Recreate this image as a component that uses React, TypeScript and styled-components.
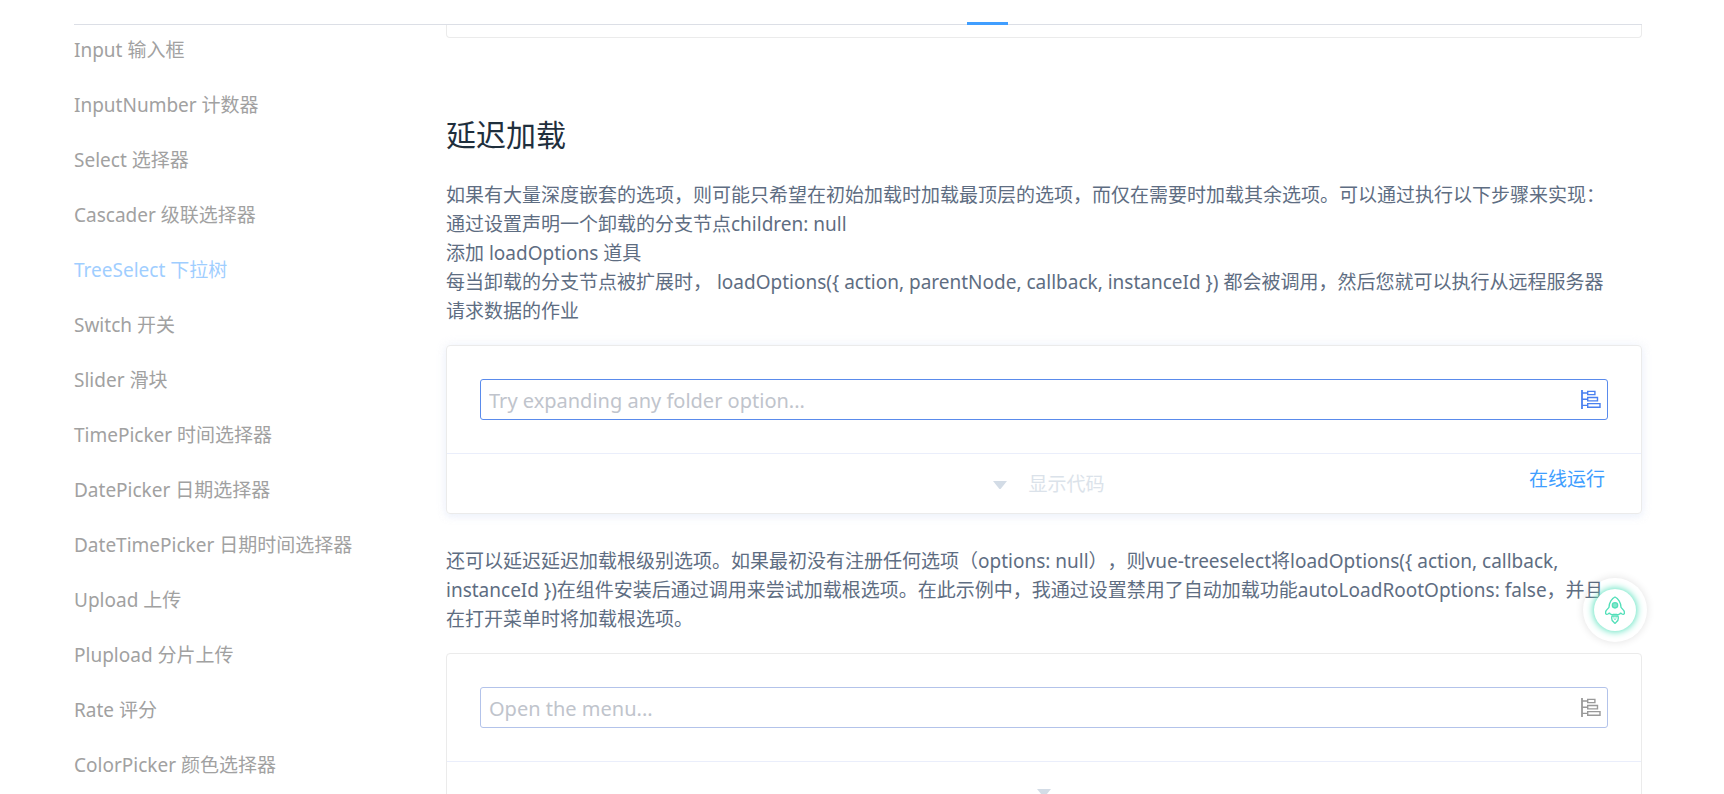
import React, { useState } from 'react';
import styled, { createGlobalStyle } from 'styled-components';

const GlobalStyle = createGlobalStyle`
  * { box-sizing: border-box; }
  body {
    margin: 0;
    background: #fff;
    color: #5e6d82;
    font-family: "Noto Sans", "Noto Sans CJK SC", sans-serif;
    font-size: 19px;
    line-height: 29px;
    text-spacing-trim: space-all;
  }
`;

const Page = styled.div`
  height: 100vh;
  overflow: hidden;
  padding: 0 82px 0 74px;
`;

const Header = styled.header`
  display: flex;
  justify-content: flex-end;
  align-items: flex-end;
  height: 25px;
  padding-right: 634px;
  border-bottom: 1px solid #dcdfe6;
`;

const ActiveTab = styled.span`
  width: 41px;
  height: 3px;
  margin-bottom: -1px;
  background: #409eff;
`;

const Body = styled.div`
  display: flex;
`;

const Sidebar = styled.nav`
  flex: 0 0 372px;
`;

const MenuList = styled.ul`
  display: flex;
  flex-direction: column;
  gap: 15px;
  margin: 0;
  padding: 5px 0 0;
  list-style: none;
`;

const MenuLink = styled.a<{ $active?: boolean }>`
  display: block;
  line-height: 40px;
  text-decoration: none;
  white-space: nowrap;
  color: ${({ $active }) => ($active ? '#9fceff' : '#a1a1a1')};
`;

const Content = styled.main`
  flex: 1;
  min-width: 0;
`;

const CardEnd = styled.div`
  height: 13px;
  border: 1px solid #ebebeb;
  border-top: 0;
  border-radius: 0 0 4px 4px;
`;

const Title = styled.h3`
  margin: 77px 0 26px;
  color: #1f2f3d;
  font-size: 30px;
  font-weight: 400;
  line-height: 40px;
`;

const Text = styled.p`
  margin: 0 0 19px;
  padding-right: 24px;
`;

const Card = styled.section<{ $raised?: boolean }>`
  margin-bottom: 33px;
  border: 1px solid #ebebeb;
  border-radius: 4px;
  box-shadow: ${({ $raised }) =>
    $raised
      ? '0 0 11px rgba(232, 237, 250, 0.6), 0 3px 6px rgba(232, 237, 250, 0.5)'
      : 'none'};
`;

const Demo = styled.div`
  padding: 33px;
`;

const SelectBox = styled.div<{ $hot?: boolean }>`
  display: flex;
  align-items: center;
  height: 41px;
  padding: 0 6px 0 8px;
  border: 1px solid ${({ $hot }) => ($hot ? '#5a8bec' : '#b3c3ea')};
  border-radius: 3px;
  color: ${({ $hot }) => ($hot ? '#4a80f0' : '#999')};
`;

const SelectInput = styled.input`
  flex: 1;
  min-width: 0;
  height: 37px;
  padding: 2px 0 0;
  border: 0;
  outline: 0;
  background: transparent;
  color: #606266;
  font: inherit;
  font-size: 20px;
  &::placeholder { color: #c0c4cc; opacity: 1; }
`;

const IconButton = styled.button`
  display: flex;
  padding: 0 0 2px;
  border: 0;
  background: none;
  color: inherit;
  cursor: pointer;
`;

const CardFooter = styled.footer`
  display: grid;
  grid-template-columns: 1fr auto 1fr;
  align-items: center;
  height: 60px;
  border-top: 1px solid #eaeefb;
`;

const Toggle = styled.button<{ $open?: boolean }>`
  grid-column: 2;
  display: flex;
  align-items: center;
  gap: 21px;
  padding: ${({ $open }) => ($open ? '0 0 0 10px' : '0')};
  border: 0;
  background: none;
  color: #d3dce6;
  font: inherit;
  cursor: pointer;
`;

const ToggleLabel = styled.span`
  padding-top: 2px;
  opacity: 0.8;
`;

const RunLink = styled.a`
  justify-self: end;
  align-self: start;
  padding-right: 36px;
  color: #409eff;
  line-height: 50px;
  text-decoration: none;
`;

const Floating = styled.div`
  position: fixed;
  right: 77px;
  bottom: 152px;
  display: flex;
  align-items: center;
  justify-content: center;
  width: 64px;
  height: 64px;
  border-radius: 50%;
  box-shadow: 0 0 8px rgba(0, 0, 0, 0.12);
`;

const RocketButton = styled.button`
  display: flex;
  align-items: center;
  justify-content: center;
  width: 42px;
  height: 42px;
  padding: 0;
  border: 0;
  border-radius: 50%;
  background: #fff;
  box-shadow: 0 0 7px 1px #5fe3c0;
  cursor: pointer;
`;

const TreeIcon = () => (
  <svg width="20" height="24" viewBox="0 0 20 24" fill="none" stroke="currentColor" aria-hidden="true">
    <path d="M1 3v19" strokeWidth="1.8" />
    <path d="M1 6h5M1 12.2h5M1 18.4h5" strokeWidth="1.4" />
    <path d="M6.7 4.4h7.2v3.2h-7.2zM6.7 10.5h9.8v3.4h-9.8zM6.7 16.6h12.3v3.6h-12.3z" strokeWidth="1.4" />
  </svg>
);

const Caret = () => (
  <svg width="14" height="11" viewBox="0 0 14 11" fill="currentColor" aria-hidden="true">
    <path d="M0 3h14L8 10.4q-1 1-2 0z" />
  </svg>
);

const Rocket = () => (
  <svg width="20" height="28" viewBox="0 0 60 84" fill="none" stroke="#52dfb9" strokeWidth="4" strokeLinejoin="round" strokeLinecap="round" aria-hidden="true">
    <path d="M30 3C21 7 12 19 12 34L4 43Q1 47 2 53Q5 57 10 53Q13 50 16 54Q20 57 25 55H35Q40 57 44 54Q47 50 50 53Q55 57 58 53Q59 47 56 43L48 34C48 19 39 7 30 3Z" />
    <circle cx="30" cy="28" r="8" fill="#84e6cc" />
    <path d="M21 60H39Q42 72 35 77Q32 81 30 82Q28 81 25 77Q18 72 21 60Z" />
    <path d="M26 62Q27 69 30 72Q33 69 34 62" strokeWidth="2" />
  </svg>
);

const menu = [
  'Input 输入框',
  'InputNumber 计数器',
  'Select 选择器',
  'Cascader 级联选择器',
  'TreeSelect 下拉树',
  'Switch 开关',
  'Slider 滑块',
  'TimePicker 时间选择器',
  'DatePicker 日期选择器',
  'DateTimePicker 日期时间选择器',
  'Upload 上传',
  'Plupload 分片上传',
  'Rate 评分',
  'ColorPicker 颜色选择器',
];

type DemoCardProps = { placeholder: string; active?: boolean };

function DemoCard({ placeholder, active }: DemoCardProps) {
  const [value, setValue] = useState('');
  return (
    <Card $raised={active}>
      <Demo>
        <SelectBox $hot={active}>
          <SelectInput
            aria-label={placeholder}
            placeholder={placeholder}
            value={value}
            onChange={(e) => setValue(e.target.value)}
          />
          <IconButton type="button" aria-label="展开选项">
            <TreeIcon />
          </IconButton>
        </SelectBox>
      </Demo>
      <CardFooter>
        <Toggle type="button" $open={active} aria-label="显示代码">
          <Caret />
          {active && <ToggleLabel>显示代码</ToggleLabel>}
        </Toggle>
        {active && <RunLink href="#run">在线运行</RunLink>}
      </CardFooter>
    </Card>
  );
}

export default function App() {
  return (
    <Page lang="zh-CN">
      <GlobalStyle />
      <Header>
        <ActiveTab />
      </Header>
      <Body>
        <Sidebar>
          <MenuList>
            {menu.map((label) => (
              <li key={label}>
                <MenuLink href="#component" $active={label.startsWith('TreeSelect')}>
                  {label}
                </MenuLink>
              </li>
            ))}
          </MenuList>
        </Sidebar>
        <Content>
          <CardEnd />
          <Title>延迟加载</Title>
          <Text>
            如果有大量深度嵌套的选项，则可能只希望在初始加载时加载最顶层的选项，而仅在需要时加载其余选项。可以通过执行以下步骤来实现：
            <br />
            通过设置声明一个卸载的分支节点children: null
            <br />
            添加 loadOptions 道具
            <br />
            {'每当卸载的分支节点被扩展时， loadOptions({ action, parentNode, callback, instanceId }) 都会被调用，然后您就可以执行从远程服务器请求数据的作业'}
          </Text>
          <DemoCard placeholder="Try expanding any folder option..." active />
          <Text>
            {'还可以延迟延迟加载根级别选项。如果最初没有注册任何选项（options: null），则vue-treeselect将loadOptions({ action, callback, instanceId })在组件安装后通过调用来尝试加载根选项。在此示例中，我通过设置禁用了自动加载功能autoLoadRootOptions: false，并且在打开菜单时将加载根选项。'}
          </Text>
          <DemoCard placeholder="Open the menu..." />
        </Content>
      </Body>
      <Floating>
        <RocketButton type="button" aria-label="回到顶部">
          <Rocket />
        </RocketButton>
      </Floating>
    </Page>
  );
}
